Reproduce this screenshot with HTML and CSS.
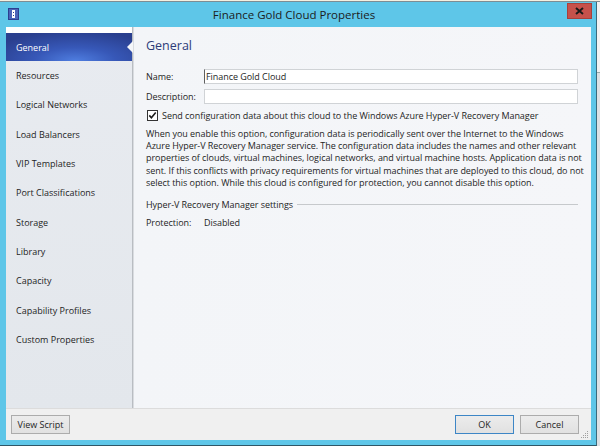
FILE: index.html
```html
<!DOCTYPE html>
<html>
<head>
<meta charset="utf-8">
<link rel="stylesheet" href="styles.css">
</head>
<body>
<div class="strip"></div>
<div class="row">
  <div class="window">
    <div class="titlebar">
      <svg class="appicon" width="11" height="12" viewBox="0 0 11 12">
        <rect x="0" y="0" width="11" height="12" fill="#2b3f8f"/>
        <rect x="1" y="1" width="9" height="10" fill="#4a64b8"/>
        <rect x="4" y="2" width="3" height="8" fill="#ffffff"/>
        <rect x="5" y="4" width="1" height="1" fill="#2b3f8f"/>
        <rect x="5" y="7" width="1" height="1" fill="#2b3f8f"/>
      </svg>
      <div class="title">Finance Gold Cloud Properties</div>
      <div class="close"><svg width="9" height="8" viewBox="0 0 9 8"><path d="M1 1 L8 7 M8 1 L1 7" stroke="#1a1a1a" stroke-width="2"/></svg></div>
    </div>
    <div class="client">
      <div class="main">
        <div class="nav">
          <div class="navtop"></div>
          <div class="item selected">General</div>
          <div class="item">Resources</div>
          <div class="item">Logical Networks</div>
          <div class="item">Load Balancers</div>
          <div class="item">VIP Templates</div>
          <div class="item">Port Classifications</div>
          <div class="item">Storage</div>
          <div class="item">Library</div>
          <div class="item">Capacity</div>
          <div class="item">Capability Profiles</div>
          <div class="item">Custom Properties</div>
        </div>
        <div class="content">
          <h1 class="heading">General</h1>
          <div class="form">
            <div class="field">
              <span class="label">Name:</span>
              <div class="input">Finance Gold Cloud</div>
            </div>
            <div class="field">
              <span class="label">Description:</span>
              <div class="input"></div>
            </div>
          </div>
          <div class="check">
            <svg class="box" width="11" height="11" viewBox="0 0 11 11">
              <rect x="0.5" y="0.5" width="10" height="10" fill="#ffffff" stroke="#333333"/>
              <path d="M2.3 5.4 L4.4 7.8 L8.7 2.6" fill="none" stroke="#1a1a1a" stroke-width="1.6"/>
            </svg>
            <span>Send configuration data about this cloud to the Windows Azure Hyper-V Recovery Manager</span>
          </div>
          <p class="para">When you enable this option, configuration data is periodically sent over the Internet to the Windows<br>Azure Hyper-V Recovery Manager service. The configuration data includes the names and other relevant<br>properties of clouds, virtual machines, logical networks, and virtual machine hosts. Application data is not<br>sent. If this conflicts with privacy requirements for virtual machines that are deployed to this cloud, do not<br>select this option. While this cloud is configured for protection, you cannot disable this option.</p>
          <div class="section">
            <span>Hyper-V Recovery Manager settings</span>
            <div class="rule"></div>
          </div>
          <div class="field plain">
            <span class="label">Protection:</span>
            <span>Disabled</span>
          </div>
        </div>
      </div>
      <div class="footer">
        <button class="btn">View Script</button>
        <div class="spacer"></div>
        <button class="btn default">OK</button>
        <button class="btn">Cancel</button>
        <svg class="grip" width="8" height="8" viewBox="0 0 8 8">
          <rect x="6" y="0" width="1" height="1" fill="#a0a0a0"/>
          <rect x="4" y="2" width="1" height="1" fill="#a0a0a0"/>
          <rect x="6" y="2" width="1" height="1" fill="#a0a0a0"/>
          <rect x="2" y="4" width="1" height="1" fill="#a0a0a0"/>
          <rect x="4" y="4" width="1" height="1" fill="#a0a0a0"/>
          <rect x="6" y="4" width="1" height="1" fill="#a0a0a0"/>
          <rect x="0" y="6" width="1" height="1" fill="#a0a0a0"/>
          <rect x="2" y="6" width="1" height="1" fill="#a0a0a0"/>
          <rect x="4" y="6" width="1" height="1" fill="#a0a0a0"/>
          <rect x="6" y="6" width="1" height="1" fill="#a0a0a0"/>
        </svg>
      </div>
    </div>
  </div>
  <div class="outside">
    <div class="out1"></div>
    <div class="out2"></div>
    <div class="out3"></div>
  </div>
</div>
</body>
</html>
```
FILE: styles.css
```css
* { box-sizing: border-box; }
html, body { margin: 0; padding: 0; }
body {
  width: 600px;
  height: 446px;
  overflow: hidden;
  background: #e6e9ec;
  font-family: "Open Sans", "Noto Sans", sans-serif;
  font-size: 9px;
  color: #1e1e1e;
}
.strip {
  height: 2px;
  background: linear-gradient(#f4efe0 0 1px, #7d8d94 1px 2px);
}
.row {
  display: flex;
  height: 444px;
}
.window {
  width: 597px;
  flex: none;
  height: 444px;
  background: #5ec6e8;
  border-right: 1px solid #3a6b7c;
  border-bottom: 1px solid #2f5666;
  padding: 0 5px 5px 6px;
  display: flex;
  flex-direction: column;
}
.titlebar {
  height: 25px;
  display: flex;
  align-items: flex-start;
  position: relative;
}
.appicon {
  margin-top: 6px;
  margin-left: 2px;
}
.title {
  flex: 1;
  text-align: center;
  font-size: 11.5px;
  line-height: 14px;
  margin-top: 6px;
  color: #1c1c1c;
  padding-left: 2px;
}
.close {
  width: 25px;
  height: 16px;
  margin-top: 1px;
  margin-right: -1px;
  background: #c6514b;
  border: 1px solid #a8403b;
  display: flex;
  align-items: center;
  justify-content: center;
}
.client {
  flex: 1;
  display: flex;
  flex-direction: column;
  background: #f0f0f0;
}
.main {
  height: 381px;
  display: flex;
}
.nav {
  width: 127px;
  flex: none;
  background: linear-gradient(#e8ebf0, #e3e7ec);
  border-right: 1px solid #b9bdc2;
  box-shadow: 1px 0 0 #d9dce0;
  display: flex;
  flex-direction: column;
}
.navtop {
  height: 6px;
  background: #ffffff;
}
.item {
  height: 29.3px;
  flex: none;
  display: flex;
  align-items: center;
  padding-left: 10px;
  font-size: 9px;
  color: #1e1e1e;
}
.item.selected {
  height: 28px;
  color: #ffffff;
  background: radial-gradient(ellipse 90px 30px at 55% 100%, #4f7ee0 0%, #3758b8 45%, #2a3f8e 100%);
  position: relative;
}
.item.selected::after {
  content: "";
  position: absolute;
  right: -1px;
  top: 8px;
  border-top: 6px solid transparent;
  border-bottom: 6px solid transparent;
  border-right: 6px solid #f4f6f9;
}
.content {
  flex: 1;
  min-width: 0;
  overflow: hidden;
  margin-left: 1px;
  background: linear-gradient(90deg, #f3f5f8, #f5f6f9);
  padding: 11px 13px 0 12px;
  letter-spacing: -0.05px;
}
.heading {
  margin: 0;
  font-size: 12.5px;
  font-weight: normal;
  line-height: 16px;
  color: #2d3c78;
  letter-spacing: 0;
}
.form {
  margin-top: 15px;
  display: flex;
  flex-direction: column;
  gap: 5px;
}
.field {
  display: flex;
  align-items: center;
}
.label {
  width: 58px;
  flex: none;
}
.input {
  flex: 1;
  height: 15px;
  background: #ffffff;
  border: 1px solid #d0d3d6;
  line-height: 13px;
  padding-left: 1px;
  border-left: 1px solid #606060;
}
.form .field:nth-child(2) .input {
  border-left-color: #d0d3d6;
}
.check {
  margin-top: 5px;
  display: flex;
  align-items: center;
  gap: 4px;
  padding-left: 1px;
}
.para {
  margin: 6px 0 0 0;
  line-height: 12.2px;
  white-space: nowrap;
}
.section {
  margin-top: 9px;
  display: flex;
  align-items: center;
  gap: 4px;
}
.rule {
  flex: 1;
  height: 1px;
  background: #c6c9cc;
}
.plain {
  margin-top: 5px;
}
.footer {
  flex: 1;
  border-top: 1px solid #dcdcdc;
  background: #f0f0f0;
  display: flex;
  align-items: flex-start;
  padding: 6px 0 0 5px;
  position: relative;
}
.spacer { flex: 1; }
.btn {
  font-family: inherit;
  font-size: 9px;
  color: #1e1e1e;
  height: 19px;
  width: 59px;
  padding: 0;
  border: 1px solid #acacac;
  background: linear-gradient(#ececec, #e1e1e1);
  margin-right: 6px;
}
.btn.default {
  border-color: #3d86c6;
}
.btn:last-of-type {
  margin-right: 12px;
}
.grip {
  position: absolute;
  right: 2px;
  bottom: 1px;
}
.outside {
  flex: 1;
  display: flex;
  flex-direction: column;
  background: #dde1e4;
}
.out1 { height: 70px; background: #f2f2f2; }
.out2 { height: 1px; background: #9aa; }
.out3 { flex: 1; }
```
